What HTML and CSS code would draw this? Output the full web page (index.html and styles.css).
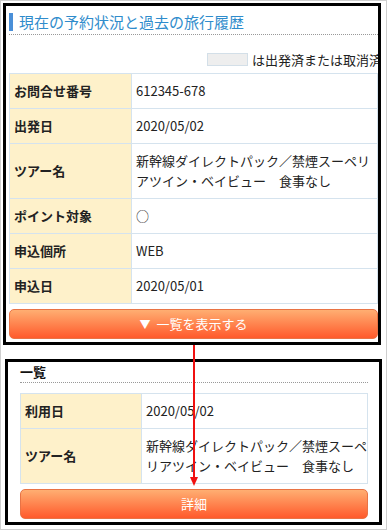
FILE: index.html
```html
<!DOCTYPE html>
<html lang="ja">
<head>
<meta charset="utf-8">
<link rel="stylesheet" href="styles.css">
</head>
<body>
<div class="frame">
  <section class="box box-main">
    <h2 class="title">現在の予約状況と過去の旅行履歴</h2>
    <div class="legend"><span class="swatch"></span><span>は出発済または取消済</span></div>
    <table class="info">
      <tr><th>お問合せ番号</th><td>612345-678</td></tr>
      <tr><th>出発日</th><td>2020/05/02</td></tr>
      <tr><th>ツアー名</th><td>新幹線ダイレクトパック／禁煙スーペリアツイン・ベイビュー　食事なし</td></tr>
      <tr><th>ポイント対象</th><td>○</td></tr>
      <tr><th>申込個所</th><td>WEB</td></tr>
      <tr><th>申込日</th><td>2020/05/01</td></tr>
    </table>
    <button class="btn"><span class="tri">▼</span>一覧を表示する</button>
  </section>
  <section class="box box-list">
    <h3 class="sub">一覧</h3>
    <table class="info info-list">
      <tr><th>利用日</th><td>2020/05/02</td></tr>
      <tr><th>ツアー名</th><td>新幹線ダイレクトパック／禁煙スーペリアツイン・ベイビュー　食事なし</td></tr>
    </table>
    <button class="btn">詳細</button>
  </section>
  <svg class="arrow" width="12" height="145" viewBox="0 0 12 145">
    <rect x="4" y="0" width="2" height="136" fill="#f01010"/>
    <polygon points="1,132 9,132 5,141" fill="#f01010"/>
  </svg>
</div>
</body>
</html>
```

FILE: styles.css
```css
* { box-sizing: border-box; }
html, body { margin: 0; padding: 0; background: #fff; }
body {
  font-family: "Noto Sans CJK JP", "Noto Sans", sans-serif;
  font-size: 13px;
  color: #222;
}
.frame {
  position: relative;
  width: 387px;
  height: 530px;
  border: 1px solid #cfcfcf;
  padding: 2px 0 0 2px;
}
.box {
  border: 3px solid #000;
  overflow: hidden;
  background: #fff;
}
.box-main {
  width: 378px;
  height: 342px;
  padding: 0 0 3px 3px;
}
.box-list {
  width: 377px;
  height: 166px;
  margin: 14px 0 0 2px;
  padding: 0 11px 3px 12px;
}
.title {
  margin: 0;
  padding: 7px 0 3px;
  border-bottom: 1px dotted #999;
  font-size: 15px;
  font-weight: normal;
  line-height: 18px;
  color: #2f8ccc;
}
.title::before {
  content: "";
  display: inline-block;
  width: 4px;
  height: 18px;
  background: #4a8fd8;
  vertical-align: top;
  margin-right: 6px;
}
.legend {
  display: flex;
  align-items: center;
  gap: 4px;
  margin-top: 16px;
  height: 17px;
  padding-left: 198px;
  white-space: nowrap;
  font-size: 13px;
  line-height: 17px;
}
.swatch {
  flex: none;
  width: 41px;
  height: 13px;
  background: #eeeeee;
  border: 1px solid #d3dfe8;
}
.info {
  width: 100%;
  margin-top: 5px;
  border-collapse: collapse;
  table-layout: fixed;
}
.info th, .info td {
  border: 1px solid #d5e3ee;
  padding: 7px 0 7px 4px;
  line-height: 20px;
  font-size: 13px;
  text-align: left;
  vertical-align: middle;
}
.info th {
  width: 122px;
  background: #fef1ca;
  font-weight: bold;
}
.info td { background: #fff; }
.info-list { margin-top: 10px; }
.info-list th { width: 121px; }
.btn {
  display: block;
  width: 100%;
  height: 30px;
  margin-top: 5px;
  border: 1px solid #e87345;
  border-radius: 5px;
  background: linear-gradient(#ffae72, #ff5a2c);
  color: #fff;
  font-family: inherit;
  font-size: 13px;
  line-height: 28px;
  padding: 0;
  text-align: center;
}
.tri {
  font-size: 11px;
  margin-right: 6px;
}
.sub {
  margin: 0;
  padding: 2px 0 2px;
  border-bottom: 1px dotted #999;
  font-size: 13px;
  font-weight: bold;
  line-height: 16px;
  color: #111;
}
.arrow {
  position: absolute;
  left: 188px;
  top: 344px;
}
```
